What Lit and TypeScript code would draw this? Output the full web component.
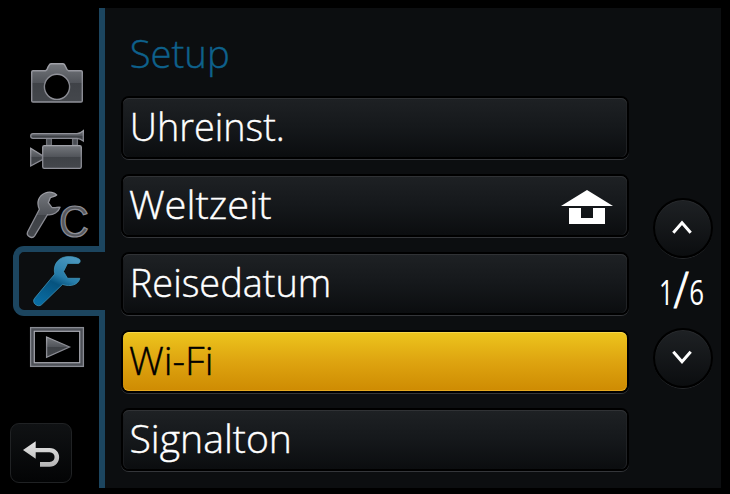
import { LitElement, html, css, svg, nothing } from "lit";
import { customElement, property } from "lit/decorators.js";

interface MenuEntry {
  label: string;
  x: number;
  width: number;
  selected?: boolean;
  home?: boolean;
}

const ENTRIES: MenuEntry[] = [
  { label: "Uhreinst.", x: 6.8, width: 155 },
  { label: "Weltzeit", x: 6, width: 142.5, home: true },
  { label: "Reisedatum", x: 6.8, width: 201.5 },
  { label: "Wi-Fi", x: 6, width: 84.5, selected: true },
  { label: "Signalton", x: 6.5, width: 162.5 },
];

const metal = svg`
  <defs>
    <linearGradient id="metal" x1="0" y1="0" x2="0" y2="1">
      <stop offset="0" stop-color="#74777c"/>
      <stop offset=".5" stop-color="#505359"/>
      <stop offset=".51" stop-color="#3f4247"/>
      <stop offset="1" stop-color="#44474c"/>
    </linearGradient>
    <linearGradient id="rim" x1="0" y1="0" x2="0" y2="1">
      <stop offset="0" stop-color="#a0a1a8"/>
      <stop offset=".5" stop-color="#85868e"/>
      <stop offset="1" stop-color="#8f9098"/>
    </linearGradient>
  </defs>`;

@customElement("menu-row")
class MenuRow extends LitElement {
  @property({ attribute: false }) entry!: MenuEntry;

  static styles = css`
    :host { display: block; }
    .row {
      box-sizing: border-box;
      height: 63px;
      border: 2px solid #000;
      border-radius: 8px;
      background: linear-gradient(#1e2124, #15181b 50%, #0b0d0f) padding-box;
      box-shadow: 0 1px 0 #34363a;
      display: flex;
      justify-content: space-between;
      color: #fff;
    }
    .face {
      flex: 1;
      display: flex;
      justify-content: space-between;
      border-radius: 6px;
      box-shadow: inset 0 1px 0 #303235, inset 1px 0 0 #191b1e, inset -1px 0 0 #202225;
    }
    .selected {
      background: linear-gradient(#edc51d, #dea410 50%, #ce8b02) padding-box;
      color: #000;
    }
    .selected .face { box-shadow: inset 0 1px 0 #f6d54a, inset 0 -1px 0 #e5a820; }
    .label { display: block; width: 300px; height: 59px; }
    .home { display: block; width: 52px; height: 36px; margin: 12px 14px 0 0; }
    text { font: 300 39px "Open Sans", "Noto Sans", sans-serif; fill: currentColor; stroke: currentColor; stroke-width: 0.4px; }
  `;

  render() {
    const e = this.entry;
    return html`<div class="row ${e.selected ? "selected" : ""}"><div class="face">
      <svg class="label" viewBox="0 0 300 59">
        <text x=${e.x} y="43.2" textLength=${e.width} lengthAdjust="spacingAndGlyphs">${e.label}</text>
      </svg>
      ${e.home
        ? html`<svg class="home" viewBox="0 0 52 36"><path fill="#fff" d="M26 2L52 18H0ZM8 20H20V30H32V20H44V36H8Z"/></svg>`
        : nothing}
    </div></div>`;
  }
}

@customElement("app-root")
class AppRoot extends LitElement {
  static styles = css`
    :host {
      display: block;
      box-sizing: border-box;
      width: 730px;
      height: 494px;
      padding: 8px 9px 6px 0;
      background: #000;
      overflow: hidden;
    }
    svg { display: block; }
    .screen { display: grid; grid-template-columns: 105px 1fr; height: 480px; }
    .side { display: flex; flex-direction: column; }
    .upper, .lower {
      box-sizing: border-box;
      border-right: 6px solid #1c455f;
      display: flex;
      flex-direction: column;
    }
    .upper { height: 238px; padding: 52px 0 0 24px; gap: 18px; }
    .lower { height: 172px; padding: 8px 0 0 10px; }
    .tab {
      box-sizing: border-box;
      height: 70px;
      margin-left: 13px;
      border: 6px solid #1c455f;
      border-right: 0;
      border-radius: 11px 0 0 11px;
      background: #0c0e10;
    }
    .icon { width: 70px; height: 48px; overflow: visible; }
    .custom {
      font: 400 44px "Liberation Sans", Arial, sans-serif;
      fill: #55575d;
      stroke: #8d8e96;
      stroke-width: 1.2px;
    }
    .play { margin-left: 18px; width: 58px; height: 44px; }
    .back {
      box-sizing: border-box;
      width: 62px;
      height: 60px;
      margin-top: 55px;
      border: 1px solid #202224;
      border-radius: 9px;
      background: linear-gradient(#101214, #030405);
    }
    .panel {
      background: #0c0e10;
      display: grid;
      grid-template-columns: 508px 60px;
      column-gap: 24px;
      padding-left: 16px;
    }
    .title { width: 200px; height: 88px; }
    .title text { font: 300 38.5px "Open Sans", "Noto Sans", sans-serif; fill: #0e618c; stroke: #0e618c; stroke-width: 0.4px; }
    .rows { display: grid; row-gap: 15px; }
    .pager { display: flex; flex-direction: column; padding-top: 190px; }
    .knob {
      box-sizing: border-box;
      width: 60px;
      height: 60px;
      border: 2px solid #000;
      border-radius: 50%;
      background: linear-gradient(#1e2124, #0b0d0f) padding-box;
      box-shadow: 0 1px 0 -0.3px #303235, inset 0 1px 0 #282a2d;
    }
    .page { width: 60px; height: 70px; overflow: visible; }
    .page text { font-family: "Open Sans", "Noto Sans", sans-serif; font-weight: 400; fill: #fff; }
    .page .slash { font-weight: 300; stroke: #fff; stroke-width: 0.9px; }
  `;

  render() {
    return html`<div class="screen">
      <div class="side">
        <div class="upper">
          <svg class="icon" viewBox="24 60 70 48">${metal}
            <path fill="url(#metal)" stroke="url(#rim)" stroke-width="1.4" fill-rule="evenodd"
              d="M33 70.7H45.5Q47 70.5 48 67L49.5 64.7Q50 63.8 51.5 63.8H62.5Q64 63.8 64.5 64.7L66 67.5Q67 70.5 68.5 70.7H81Q82.3 70.7 82.3 72V100.7Q82.3 102 81 102H33Q31.7 102 31.7 100.7V72Q31.7 70.7 33 70.7Z
              M57 74.2A12.6 12.6 0 1 0 57 99.4A12.6 12.6 0 1 0 57 74.2Z"/>
          </svg>
          <svg class="icon" viewBox="24 126 70 48">${metal}
            <g fill="url(#metal)" stroke="url(#rim)" stroke-width="1.3">
              <path fill="#4b4e54" d="M46.6 138.5H51.4V145.5H46.6ZM72.6 138.5H77.4V145.5H72.6Z" stroke="#6e7076"/>
              <path d="M33 133.7H77Q80 133.5 83.3 130.7V141Q80 138.3 77 138.3H33Q30.7 138.3 30.7 136T33 133.7Z"/>
              <path d="M30.7 148.3L42.5 155.7V159.5L30.7 166Z"/>
              <rect x="42.7" y="145.7" width="38.6" height="22.6" rx="1.6"/>
            </g>
          </svg>
          <svg class="icon" viewBox="24 192 70 48">${metal}
            <path fill="url(#metal)" stroke="url(#rim)" stroke-width="1.3"
              d="M56.6 195C54.5 192.3 49.5 191.4 45.2 193C38.6 195.5 36.2 202.5 39.4 209.3L27.7 231.8C25.8 235.6 31.8 239.6 34.6 235.8L47.5 214.7C53.5 215.3 58.6 212 60 207.3C57.5 207 54.5 208.3 51.8 207.3L48.3 202.7L50.3 197.8C52.5 196.3 55 196.7 56.6 195Z"/>
            <text class="custom" x="0" y="0" transform="translate(59 237.2) scale(.94 1.02)">C</text>
          </svg>
        </div>
        <div class="tab">
          <svg width="86" height="58" viewBox="19 252 86 58">
            <defs>
              <linearGradient id="steel" gradientUnits="userSpaceOnUse" x1="68" y1="257" x2="45" y2="305">
                <stop offset="0" stop-color="#4995bd"/><stop offset=".38" stop-color="#267ca9"/>
                <stop offset=".55" stop-color="#06537f"/><stop offset="1" stop-color="#096ca2"/>
              </linearGradient>
            </defs>
            <path fill="url(#steel)" stroke="#4295ba" stroke-opacity=".75" stroke-width="1"
              d="M79.5 259.3C76 256.9 71 256.2 66 256.8C57.5 257.8 52.8 265.5 54.8 274L34.6 298.3C31.1 302.6 37.7 308.2 41.7 304.6L62.5 284.4C70.5 287.2 78.5 284.8 79.8 278.3H67.5L63.5 271.5L67.5 263.5H78.5C80.5 262.8 80.6 260.5 79.5 259.3Z"/>
          </svg>
        </div>
        <div class="lower">
          <svg class="play" viewBox="28 324 58 44">${metal}
            <rect x="32" y="329" width="50" height="36" fill="none" stroke="#4d5057" stroke-width="4"/>
            <rect x="30.6" y="327.6" width="52.8" height="38.8" fill="none" stroke="#898b93" stroke-width="1.3"/>
            <rect x="34.3" y="331.3" width="45.4" height="31.4" fill="none" stroke="#a9aab2" stroke-width="1.2"/>
            <path d="M46.6 337L69.5 347L46.6 357.3Z" fill="url(#metal)" stroke="url(#rim)" stroke-width="1.3"/>
          </svg>
          <div class="back">
            <svg width="60" height="58" viewBox="11 424 60 58">
              <defs><linearGradient id="silver" x1="0" y1="0" x2="0" y2="1">
                <stop offset="0" stop-color="#e6e6e6"/><stop offset="1" stop-color="#b4b4b4"/>
              </linearGradient></defs>
              <path fill="url(#silver)" d="M23 450L35.7 441.3V448H49.5C62.4 448 62.4 466.7 49.5 466.7H40V462H49.5C56.3 462 56.3 452.3 49.5 452.3H35.7V458.7Z"/>
            </svg>
          </div>
        </div>
      </div>
      <div class="panel">
        <div>
          <svg class="title" viewBox="0 0 200 88"><text x="8.7" y="60.2" textLength="100" lengthAdjust="spacingAndGlyphs">Setup</text></svg>
          <div class="rows">${ENTRIES.map((e) => html`<menu-row .entry=${e}></menu-row>`)}</div>
        </div>
        <div class="pager">
          <div class="knob"><svg width="56" height="56" viewBox="655 200 56 56"><path d="M673.3 232.8L682 222.8L690.7 232.8" fill="none" stroke="#fff" stroke-width="3"/></svg></div>
          <svg class="page" viewBox="653 258 60 70">
            <text font-size="35" transform="translate(659 305) scale(.72 1)">1</text>
            <text class="slash" font-size="49" transform="translate(673.5 307.5) scale(.92 1)">/</text>
            <text font-size="35" transform="translate(689.3 305) scale(.74 1)">6</text>
          </svg>
          <div class="knob"><svg width="56" height="56" viewBox="655 330 56 56"><path d="M673.3 351.7L682 361.7L690.7 351.7" fill="none" stroke="#fff" stroke-width="3"/></svg></div>
        </div>
      </div>
    </div>`;
  }
}
